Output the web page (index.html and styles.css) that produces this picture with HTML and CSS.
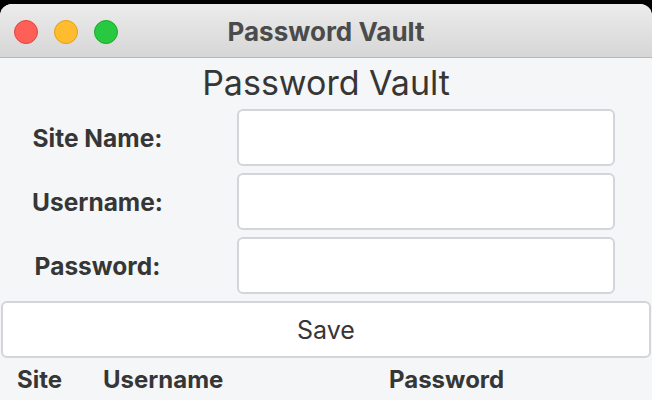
FILE: index.html
```html
<!DOCTYPE html>
<html>
<head>
<meta charset="utf-8">
<link rel="stylesheet" href="styles.css">
</head>
<body>
<div class="window">
  <div class="titlebar">
    <div class="lights">
      <span class="light red"></span>
      <span class="light yellow"></span>
      <span class="light green"></span>
    </div>
    <div class="title">Password Vault</div>
    <div></div>
  </div>
  <div class="content">
    <h1 class="heading">Password Vault</h1>
    <div class="form">
      <label class="label">Site Name:</label>
      <div class="field"></div>
      <label class="label">Username:</label>
      <div class="field"></div>
      <label class="label">Password:</label>
      <div class="field"></div>
    </div>
    <div class="save">Save</div>
    <div class="table-head">
      <span class="col col-site">Site</span>
      <span class="col col-user">Username</span>
      <span class="col col-pass">Password</span>
    </div>
  </div>
</div>
</body>
</html>
```
FILE: styles.css
```css
html, body {
  margin: 0;
  padding: 0;
  background: #000;
  width: 652px;
  height: 400px;
  overflow: hidden;
  font-family: "Inter", "Liberation Sans", sans-serif;
}
.window {
  margin-top: 4px;
  height: 396px;
  border-radius: 12px 12px 0 0;
  overflow: hidden;
  background: #f5f6f8;
  display: flex;
  flex-direction: column;
}
.titlebar {
  height: 53px;
  flex: none;
  background: linear-gradient(#ececec, #d6d6d6);
  border-bottom: 1px solid #b8b8b8;
  display: grid;
  grid-template-columns: 1fr auto 1fr;
  align-items: center;
}
.lights {
  display: flex;
  gap: 16px;
  padding-left: 14px;
  padding-top: 2px;
}
.light {
  width: 24px;
  height: 24px;
  border-radius: 50%;
  box-sizing: border-box;
}
.red { background: #fe5f57; border: 1px solid #e2463f; }
.yellow { background: #febc2e; border: 1px solid #e1a116; }
.green { background: #28c840; border: 1px solid #1aab29; }
.title {
  font-weight: 700;
  font-size: 26px;
  color: #4b4b4b;
  padding-top: 2px;
}
.content {
  flex: 1;
  display: flex;
  flex-direction: column;
}
.heading {
  margin: 0;
  height: 51px;
  line-height: 50px;
  text-align: center;
  font-weight: 400;
  font-size: 34px;
  color: #363636;
}
.form {
  display: grid;
  grid-template-columns: 195px 378px;
  column-gap: 42px;
  row-gap: 7px;
}
.label {
  display: flex;
  align-items: center;
  justify-content: center;
  font-weight: 700;
  font-size: 24.5px;
  color: #363636;
}
.field {
  height: 57px;
  box-sizing: border-box;
  background: #fff;
  border: 2px solid #d3d5da;
  border-radius: 6px;
}
.save {
  margin: 7px 1px 0;
  height: 57px;
  box-sizing: border-box;
  background: #fff;
  border: 2px solid #d3d5da;
  border-radius: 6px;
  display: flex;
  align-items: center;
  justify-content: center;
  font-size: 25px;
  color: #363636;
}
.table-head {
  display: grid;
  grid-template-columns: 86px 286px 1fr;
  padding-left: 17px;
  padding-top: 7px;
  font-weight: 700;
  font-size: 24px;
  color: #363636;
}
```
